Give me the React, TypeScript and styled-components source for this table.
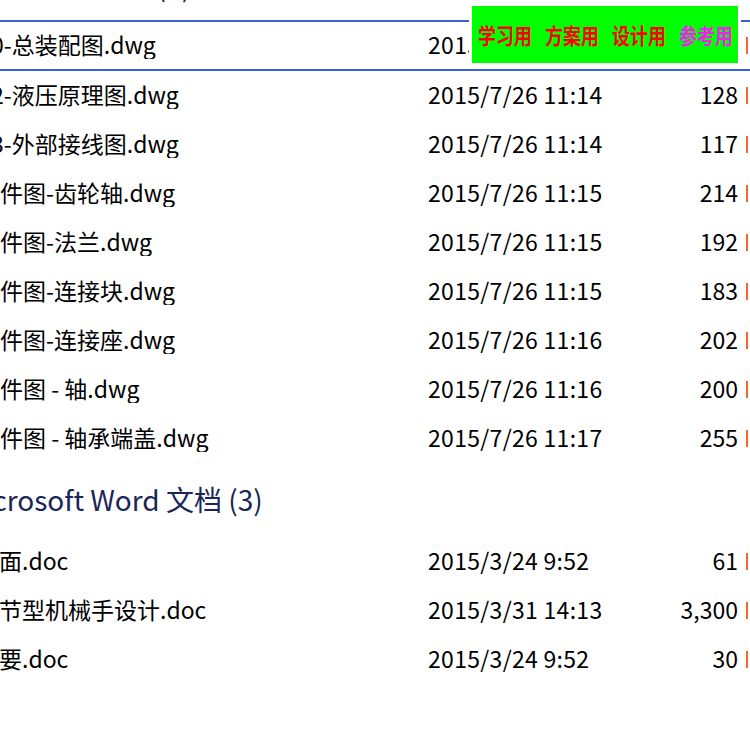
import React, { FC } from "react";
import styled, { createGlobalStyle } from "styled-components";

const GlobalStyle = createGlobalStyle`
  html, body {
    margin: 0;
    padding: 0;
    background: #ffffff;
    overflow: hidden;
  }
`;

const FONT = `"Noto Sans CJK SC", "Noto Sans", sans-serif`;

const Page = styled.div`
  position: relative;
  width: 750px;
  height: 750px;
  overflow: hidden;
  background: #ffffff;
  font-family: ${FONT};
  color: #000000;
`;

const List = styled.div`
  display: flex;
  flex-direction: column;
  margin-top: -54px;
`;

const GroupHeader = styled.div<{ $pad?: number; $indent?: number }>`
  height: 74px;
  box-sizing: border-box;
  padding-top: ${({ $pad }) => $pad || 0}px;
  padding-bottom: 3px;
  display: flex;
  align-items: center;
  font-size: 28px;
  line-height: 34px;
  color: #1a2656;
  white-space: nowrap;
  text-indent: ${({ $indent }) => $indent || 0}px;
`;

const Row = styled.div<{ $selected?: boolean }>`
  display: grid;
  grid-template-columns: 428px 200px 110px 8px 2px;
  align-items: center;
  height: ${({ $selected }) => ($selected ? "51px" : "49px")};
  box-sizing: border-box;
  padding-bottom: 4px;
  border-top: ${({ $selected }) => ($selected ? "2px solid #3d5fd6" : "none")};
  border-bottom: ${({ $selected }) => ($selected ? "2px solid #3d5fd6" : "none")};
  font-size: 23px;
  line-height: 30px;
`;

const NameCell = styled.div<{ $cut?: number }>`
  overflow: hidden;
  white-space: nowrap;
  text-indent: ${({ $cut }) => -($cut || 0)}px;
`;

const DateCell = styled.div`
  white-space: nowrap;
  letter-spacing: 0.3px;
`;

const SizeCell = styled.div`
  text-align: right;
  white-space: nowrap;
`;

const TypeMark = styled.span`
  grid-column: 5;
  display: block;
  width: 2px;
  height: 17px;
  margin-top: 3px;
  background: #f0682c;
`;

const Banner = styled.div`
  position: absolute;
  left: 469px;
  top: 3px;
  width: 272px;
  height: 63px;
  box-sizing: border-box;
  border: 3px solid #ffffff;
  background: #00ff00;
  display: flex;
  align-items: center;
  gap: 13px;
  padding-left: 6px;
  padding-bottom: 2px;
  font-size: 18px;
  font-weight: 700;
`;

const Tag = styled.span<{ $color: string }>`
  color: ${({ $color }) => $color};
  white-space: nowrap;
  display: inline-block;
  transform: scaleY(1.2);
`;

type FileItem = {
  name: string;
  date: string;
  size: string;
  cut?: number;
  selected?: boolean;
};

const dwgFiles: FileItem[] = [
  { name: "0-总装配图.dwg", date: "2015/7/26 11:14", size: "96", cut: 9, selected: true },
  { name: "2-液压原理图.dwg", date: "2015/7/26 11:14", size: "128", cut: 9 },
  { name: "3-外部接线图.dwg", date: "2015/7/26 11:14", size: "117", cut: 9 },
  { name: "件图-齿轮轴.dwg", date: "2015/7/26 11:15", size: "214" },
  { name: "件图-法兰.dwg", date: "2015/7/26 11:15", size: "192" },
  { name: "件图-连接块.dwg", date: "2015/7/26 11:15", size: "183" },
  { name: "件图-连接座.dwg", date: "2015/7/26 11:16", size: "202" },
  { name: "件图 - 轴.dwg", date: "2015/7/26 11:16", size: "200" },
  { name: "件图 - 轴承端盖.dwg", date: "2015/7/26 11:17", size: "255" },
];

const docFiles: FileItem[] = [
  { name: "面.doc", date: "2015/3/24 9:52", size: "61", cut: 1 },
  { name: "节型机械手设计.doc", date: "2015/3/31 14:13", size: "3,300", cut: 1 },
  { name: "要.doc", date: "2015/3/24 9:52", size: "30", cut: 1 },
];

const FileRow: FC<{ item: FileItem }> = ({ item }) => (
  <Row $selected={item.selected}>
    <NameCell $cut={item.cut}>{item.name}</NameCell>
    <DateCell>{item.date}</DateCell>
    <SizeCell>{item.size}</SizeCell>
    <TypeMark />
  </Row>
);

const App: FC = () => {
  return (
    <Page>
      <GlobalStyle />
      <List>
        {/* group header mostly hidden above the top edge */}
        <GroupHeader $pad={7} $indent={-27}>
          AutoCAD 图形 (9)
        </GroupHeader>
        {dwgFiles.map((f) => (
          <FileRow key={f.name} item={f} />
        ))}
        <GroupHeader $indent={-38}>Microsoft Word 文档 (3)</GroupHeader>
        {docFiles.map((f) => (
          <FileRow key={f.name} item={f} />
        ))}
      </List>
      <Banner>
        <Tag $color="#ff0000">学习用</Tag>
        <Tag $color="#ff0000">方案用</Tag>
        <Tag $color="#ff0000">设计用</Tag>
        <Tag $color="#f020f0">参考用</Tag>
      </Banner>
    </Page>
  );
};

export default App;
